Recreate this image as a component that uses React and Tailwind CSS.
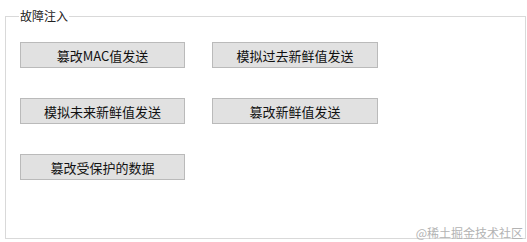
import React from "react";

const buttons = [
  "篡改MAC值发送",
  "模拟过去新鲜值发送",
  "模拟未来新鲜值发送",
  "篡改新鲜值发送",
  "篡改受保护的数据",
];

const App = () => {
  return (
    <div
      className="relative w-[527px] h-[242px] bg-white text-[#1a1a1a] overflow-hidden"
      style={{ fontFamily: '"Noto Sans CJK SC", "Noto Sans", sans-serif' }}
    >
      <fieldset className="ml-[5px] mt-[6px] w-[521px] h-[233px] border border-[#d9d9d9] px-[14px] pb-0 pt-[16px]">
        <legend className="ml-[-1px] px-[1px] text-[12px] leading-[20px] text-[#222]">
          故障注入
        </legend>
        <div className="grid grid-cols-[165px_166px] gap-x-[27px] gap-y-[30px]">
          {buttons.map((label) => (
            <button
              key={label}
              className="h-[26px] bg-[#e1e1e1] border border-[#bababa] text-[13px] leading-none text-[#111]"
            >
              {label}
            </button>
          ))}
        </div>
      </fieldset>
      <div className="absolute right-[4px] bottom-[2px] text-[12px] leading-[14px] text-[#b3b3b3]">
        @稀土掘金技术社区
      </div>
    </div>
  );
};

export default App;
